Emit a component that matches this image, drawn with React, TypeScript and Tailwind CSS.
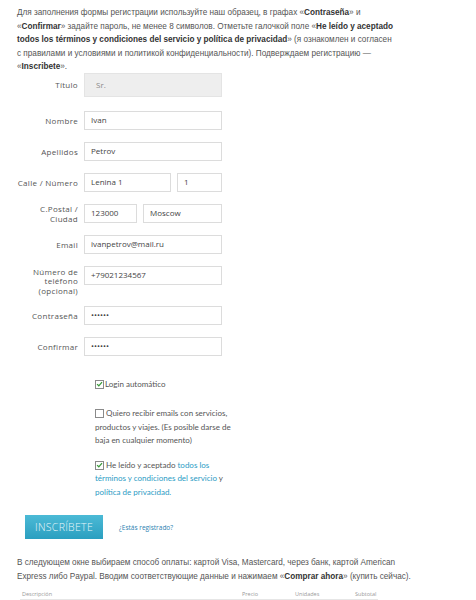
import type { ReactNode } from "react";

const sans = "font-['Open_Sans','Liberation_Sans',sans-serif]";
const lato = "font-['Lato','Liberation_Sans',sans-serif]";
const body = "font-['Liberation_Sans','DejaVu_Sans',sans-serif]";

function Box({
  value,
  className = "",
}: {
  value: string;
  className?: string;
}) {
  return (
    <div
      className={`flex h-[19px] items-center border border-[#dcdcdc] bg-white px-[6px] text-[8px] text-[#444] ${className}`}
    >
      {value}
    </div>
  );
}

function Row({
  label,
  children,
  height = "h-[31px]",
  labelClass = "leading-[19px]",
}: {
  label: ReactNode;
  children: ReactNode;
  height?: string;
  labelClass?: string;
}) {
  return (
    <div className={`flex items-start ${height}`}>
      <div
        className={`w-[78px] shrink-0 text-right text-[8px] tracking-[0.3px] text-[#555] ${labelClass}`}
      >
        {label}
      </div>
      <div className="ml-[6px] flex w-[138px] gap-[6px]">{children}</div>
    </div>
  );
}

function Check({ checked }: { checked: boolean }) {
  return (
    <span className="mt-[2px] inline-flex h-[9px] w-[9px] shrink-0 items-center justify-center border border-[#8a8a8a] bg-white">
      {checked && (
        <svg viewBox="0 0 10 10" className="h-[8px] w-[8px]">
          <path
            d="M1.5 5.2 L4 7.6 L8.6 2.2"
            fill="none"
            stroke="#3a9a3a"
            strokeWidth="1.8"
          />
        </svg>
      )}
    </span>
  );
}

export default function App() {
  return (
    <div className="min-h-[600px] w-[476px] bg-white">
      {/* instrucciones */}
      <p
        className={`px-[17px] pt-[6px] text-[8.2px] leading-[13.6px] text-[#555] whitespace-nowrap ${body}`}
      >
        Для заполнения формы регистрации используйте наш образец, в графах «
        <b className="text-[#333]">Contraseña</b>» и
        <br />«<b className="text-[#333]">Confirmar</b>» задайте пароль, не менее 8
        символов. Отметьте галочкой поле «
        <b className="text-[#333]">He leído y aceptado</b>
        <br />
        <b className="text-[#333]">
          todos los términos y condiciones del servicio y política de privacidad
        </b>
        » (я ознакомлен и согласен
        <br />с правилами и условиями и политикой конфиденциальности).
        Подверждаем регистрацию —
        <br />«<b className="text-[#333]">Inscribete</b>».
      </p>

      <div className={`mt-[-1px] flex flex-col ${sans}`}>
        <Row label="Título" height="h-[38px]" labelClass="leading-[24px]">
          <div className="flex h-[24px] w-full items-center border border-[#e4e4e4] bg-[#eeeeee] px-[11px] text-[8px] text-[#888]">
            Sr.
          </div>
        </Row>
        <Row label="Nombre">
          <Box value="Ivan" className="w-full" />
        </Row>
        <Row label="Apellidos">
          <Box value="Petrov" className="w-full" />
        </Row>
        <Row label="Calle / Número">
          <Box value="Lenina 1" className="w-[87px]" />
          <Box value="1" className="flex-1" />
        </Row>
        <Row
          label={
            <>
              C.Postal /<br />
              Ciudad
            </>
          }
          labelClass="leading-[10px]"
        >
          <Box value="123000" className="w-[53px]" />
          <Box value="Moscow" className="flex-1" />
        </Row>
        <Row label="Email">
          <Box value="ivanpetrov@mail.ru" className="w-full" />
        </Row>
        <Row
          label={
            <>
              Número de
              <br />
              teléfono
              <br />
              (opcional)
            </>
          }
          height="h-[40px]"
          labelClass="leading-[9.5px] pt-[1px]"
        >
          <Box value="+79021234567" className="w-full" />
        </Row>
        <Row label="Contraseña">
          <Box value="••••••" className="w-full text-[6px]" />
        </Row>
        <Row label="Confirmar">
          <Box value="••••••" className="w-full text-[6px]" />
        </Row>
      </div>

      <div
        className={`ml-[95px] mt-[10px] flex w-[138px] flex-col text-[8px] leading-[13.5px] text-[#555] ${lato}`}
      >
        <label className="flex items-start gap-[1px]">
          <Check checked />
          <span>Login automático</span>
        </label>
        <label className="mt-[16px]">
          <span className="inline-flex align-top">
            <Check checked={false} />
          </span>{" "}
          Quiero recibir emails con servicios, productos y viajes. (Es posible
          darse de baja en cualquier momento)
        </label>
        <label className="mt-[11px]">
          <span className="inline-flex align-top">
            <Check checked />
          </span>{" "}
          He leído y aceptado{" "}
          <span className="text-[#2b9bc4]">
            todos los términos y condiciones del servicio
          </span>{" "}
          y <span className="text-[#2b9bc4]">política de privacidad.</span>
        </label>
      </div>

      <div className={`ml-[25px] mt-[16px] flex items-center ${sans}`}>
        <button
          type="button"
          className="h-[24px] w-[78px] bg-gradient-to-b from-[#4bbad6] to-[#2a9fc0] text-[10.5px] font-light tracking-[0.3px] text-[#e8f6fa]"
        >
          INSCRÍBETE
        </button>
        <span className="ml-[16px] text-[6.5px] text-[#2b7fb0]">
          ¿Estás registrado?
        </span>
      </div>

      <p
        className={`mt-[17px] px-[17px] text-[8.2px] leading-[13.6px] text-[#555] whitespace-nowrap ${body}`}
      >
        В следующем окне выбираем способ оплаты: картой Visa, Mastercard, через
        банк, картой American
        <br />
        Express либо Paypal. Вводим соответствующие данные и нажимаем «
        <b className="text-[#333]">Comprar ahora</b>» (купить сейчас).
      </p>

      <div
        className={`ml-[20px] mt-[6px] flex w-[358px] border-b border-[#e6e6e6] pb-[1px] text-[5.5px] text-[#999] ${sans}`}
      >
        <span className="w-[222px] pl-[2px]">Descripción</span>
        <span className="w-[53px]">Precio</span>
        <span className="w-[60px]">Unidades</span>
        <span>Subtotal</span>
      </div>
    </div>
  );
}
